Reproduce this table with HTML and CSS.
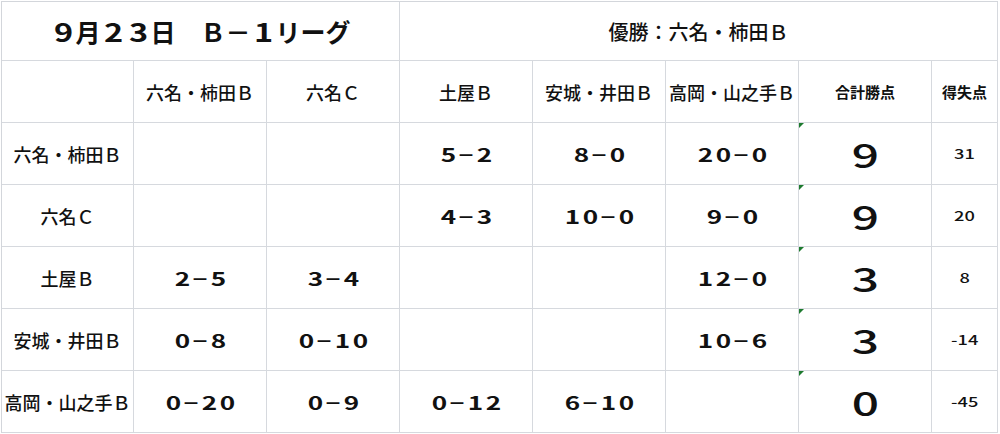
FILE: index.html
```html
<!DOCTYPE html>
<html lang="ja">
<head>
<meta charset="utf-8">
<title>9月23日 B－1リーグ</title>
<link rel="stylesheet" href="styles.css">
</head>
<body>
<div class="sheet">
  <div class="cell title span3"><i class="d">9</i>月<i class="d">2</i><i class="d">3</i>日　Ｂ－<i class="d">1</i>リーグ</div>
  <div class="cell champ span5">優勝：六名・柿田Ｂ</div>

  <div class="cell"></div>
  <div class="cell name">六名・柿田Ｂ</div>
  <div class="cell name">六名Ｃ</div>
  <div class="cell name">土屋Ｂ</div>
  <div class="cell name">安城・井田Ｂ</div>
  <div class="cell name">高岡・山之手Ｂ</div>
  <div class="cell head">合計勝点</div>
  <div class="cell head">得失点</div>

  <div class="cell name">六名・柿田Ｂ</div>
  <div class="cell"></div>
  <div class="cell"></div>
  <div class="cell score"><i class="d">5</i>－<i class="d">2</i></div>
  <div class="cell score"><i class="d">8</i>－<i class="d">0</i></div>
  <div class="cell score"><i class="d">2</i><i class="d">0</i>－<i class="d">0</i></div>
  <div class="cell pts"><span class="flag"></span><i class="p">9</i></div>
  <div class="cell diff"><i class="s">31</i></div>

  <div class="cell name">六名Ｃ</div>
  <div class="cell"></div>
  <div class="cell"></div>
  <div class="cell score"><i class="d">4</i>－<i class="d">3</i></div>
  <div class="cell score"><i class="d">1</i><i class="d">0</i>－<i class="d">0</i></div>
  <div class="cell score"><i class="d">9</i>－<i class="d">0</i></div>
  <div class="cell pts"><span class="flag"></span><i class="p">9</i></div>
  <div class="cell diff"><i class="s">20</i></div>

  <div class="cell name">土屋Ｂ</div>
  <div class="cell score"><i class="d">2</i>－<i class="d">5</i></div>
  <div class="cell score"><i class="d">3</i>－<i class="d">4</i></div>
  <div class="cell"></div>
  <div class="cell"></div>
  <div class="cell score"><i class="d">1</i><i class="d">2</i>－<i class="d">0</i></div>
  <div class="cell pts"><span class="flag"></span><i class="p">3</i></div>
  <div class="cell diff"><i class="s">8</i></div>

  <div class="cell name">安城・井田Ｂ</div>
  <div class="cell score"><i class="d">0</i>－<i class="d">8</i></div>
  <div class="cell score"><i class="d">0</i>－<i class="d">1</i><i class="d">0</i></div>
  <div class="cell"></div>
  <div class="cell"></div>
  <div class="cell score"><i class="d">1</i><i class="d">0</i>－<i class="d">6</i></div>
  <div class="cell pts"><span class="flag"></span><i class="p">3</i></div>
  <div class="cell diff"><i class="s">-14</i></div>

  <div class="cell name">高岡・山之手Ｂ</div>
  <div class="cell score"><i class="d">0</i>－<i class="d">2</i><i class="d">0</i></div>
  <div class="cell score"><i class="d">0</i>－<i class="d">9</i></div>
  <div class="cell score"><i class="d">0</i>－<i class="d">1</i><i class="d">2</i></div>
  <div class="cell score"><i class="d">6</i>－<i class="d">1</i><i class="d">0</i></div>
  <div class="cell"></div>
  <div class="cell pts"><span class="flag"></span><i class="p">0</i></div>
  <div class="cell diff"><i class="s">-45</i></div>
</div>
</body>
</html>
```
FILE: styles.css
```css
html, body {
  margin: 0;
  padding: 0;
  background: #ffffff;
}
body {
  font-family: "Noto Sans CJK JP", "Noto Sans", sans-serif;
  color: #111111;
}
.sheet {
  margin: 1px 0 0 1px;
  width: 997px;
  box-sizing: border-box;
  display: grid;
  grid-template-columns: 132px repeat(6, 133px) 66px;
  grid-template-rows: 59px repeat(6, 62px);
  border-top: 1px solid #d3d6db;
  border-left: 1px solid #d3d6db;
}
.cell {
  box-sizing: border-box;
  border-right: 1px solid #d6d9de;
  border-bottom: 1px solid #d6d9de;
  display: flex;
  align-items: center;
  justify-content: center;
  white-space: nowrap;
  position: relative;
}
.d, .p, .s {
  display: inline-block;
  font-style: normal;
}
.d {
  width: 0.56em;
  margin: 0 0.22em;
  text-align: center;
  transform: scaleX(1.45);
}
.span3 { grid-column: span 3; }
.span5 { grid-column: span 5; }
.title {
  font-size: 25px;
  font-weight: 700;
}
.title .d {
  transform: scaleX(1.3);
}
.champ {
  font-size: 20px;
  font-weight: 500;
}
.name {
  font-size: 18px;
  font-weight: 500;
}
.head {
  font-size: 15px;
  font-weight: 700;
}
.score {
  font-size: 18px;
  font-weight: 700;
}
.pts {
  font-size: 33px;
  font-weight: 500;
}
.p {
  transform: scaleX(1.45);
}
.diff {
  font-size: 13px;
  font-weight: 500;
}
.s {
  transform: scaleX(1.4);
}
.flag {
  position: absolute;
  left: 0;
  top: 0;
  width: 0;
  height: 0;
  border-top: 5px solid #1d7a2e;
  border-right: 5px solid transparent;
}
```
